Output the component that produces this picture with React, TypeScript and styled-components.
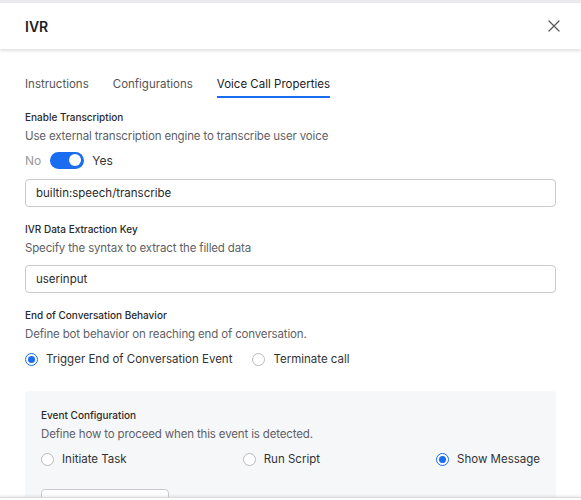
import React from "react";
import styled, { createGlobalStyle } from "styled-components";

const GlobalStyle = createGlobalStyle`
    html, body {
        margin: 0;
        padding: 0;
        background: #ffffff;
        font-family: Inter, "Noto Sans", "Liberation Sans", sans-serif;
        color: #222;
    }
    * { box-sizing: border-box; }
`;

const Drawer = styled.div`
    height: 500px;
    display: flex;
    flex-direction: column;
    border-top: 3px solid #ebebee;
    overflow: hidden;
`;

/* Header */
const Header = styled.div`
    height: 46px;
    flex-shrink: 0;
    display: flex;
    align-items: center;
    justify-content: space-between;
    padding: 0 20px 0 25px;
    background: #fff;
    box-shadow: 0 2px 3px rgba(0, 0, 0, 0.12);
    position: relative;
    z-index: 1;
`;
const Title = styled.h1`
    margin: 0;
    font-size: 14px;
    font-weight: 600;
    color: #1d1d1f;
`;
const CloseButton = styled.button`
    border: none;
    background: none;
    padding: 0;
    width: 14px;
    height: 14px;
    display: flex;
    align-items: center;
    justify-content: center;
    cursor: pointer;
`;

/* Tabs */
const Tabs = styled.div`
    display: flex;
    gap: 24px;
    margin: 26px 25px 0;
`;
const Tab = styled.div<{ $active?: boolean }>`
    font-size: 11.5px;
    line-height: 18px;
    padding-bottom: 3px;
    color: ${({ $active }) => ($active ? "#1d1d1f" : "#555")};
    border-bottom: 2px solid ${({ $active }) => ($active ? "#1a6cf0" : "transparent")};
`;

/* Body */
const Body = styled.div`
    flex: 1;
    overflow: hidden;
    padding: 11px 25px 0;
`;
const Label = styled.div<{ $top?: number }>`
    font-size: 10px;
    line-height: 16px;
    font-weight: 500;
    color: #2a2a2a;
    margin: ${({ $top }) => $top ?? 0}px 0 2px;
`;
const Desc = styled.div`
    font-size: 11.5px;
    letter-spacing: -0.15px;
    line-height: 18px;
    color: #5f5f66;
`;
const ToggleRow = styled.div`
    display: flex;
    align-items: center;
    height: 20px;
    margin-top: 5px;
    font-size: 12px;
`;
const ToggleText = styled.span<{ $on?: boolean }>`
    color: ${({ $on }) => ($on ? "#333" : "#999")};
`;
const Switch = styled.span`
    width: 34px;
    height: 17px;
    border-radius: 9px;
    background: #1a6cf0;
    margin: 0 8px 0 9px;
    display: flex;
    align-items: center;
    justify-content: flex-end;
    padding-right: 3px;
    &::after {
        content: "";
        width: 12px;
        height: 12px;
        border-radius: 50%;
        background: #fff;
    }
`;
const Input = styled.div<{ $top: number }>`
    height: 28px;
    margin-top: ${({ $top }) => $top}px;
    border: 1px solid #c9c9cf;
    border-radius: 4px;
    padding: 0 10px;
    display: flex;
    align-items: center;
    font-size: 11.5px;
    color: #2a2a2a;
`;
const RadioRow = styled.div<{ $spread?: boolean; $top: number }>`
    display: flex;
    align-items: center;
    height: 20px;
    margin-top: ${({ $top }) => $top}px;
    gap: 20px;
    justify-content: ${({ $spread }) => ($spread ? "space-between" : "flex-start")};
`;
const RadioItem = styled.label`
    display: flex;
    align-items: center;
    gap: 8px;
    font-size: 11.5px;
    color: #333;
`;
const RadioCircle = styled.span<{ $checked?: boolean }>`
    width: 13px;
    height: 13px;
    border-radius: 50%;
    border: 1px solid ${({ $checked }) => ($checked ? "#1a6cf0" : "#b9b9c0")};
    background: #fff;
    display: flex;
    align-items: center;
    justify-content: center;
    &::after {
        content: "";
        width: 7px;
        height: 7px;
        border-radius: 50%;
        background: ${({ $checked }) => ($checked ? "#1a6cf0" : "transparent")};
    }
`;

/* Event panel */
const Panel = styled.div`
    margin-top: 22px;
    background: #f6f7f9;
    border-radius: 4px;
    padding: 16px 16px 20px;
`;
const OutlineButton = styled.div`
    width: 128px;
    height: 32px;
    margin-top: 20px;
    border: 1px solid #c9c9cf;
    border-radius: 4px;
    background: #fff;
`;

const Footer = styled.div`
    height: 3px;
    flex-shrink: 0;
    background: #fff;
    border-top: 1px solid #dcdce0;
    box-shadow: 0 -1px 3px rgba(0, 0, 0, 0.1);
    position: relative;
`;

const Radio: React.FC<{ label: string; checked?: boolean }> = ({ label, checked }) => (
    <RadioItem>
        <RadioCircle $checked={checked} />
        {label}
    </RadioItem>
);

const App: React.FC = () => {
    return <>
        <GlobalStyle />
        <Drawer>
            <Header>
                <Title>IVR</Title>
                <CloseButton aria-label="close">
                    <svg width="12" height="12" viewBox="0 0 12 12">
                        <path d="M1 1L11 11M11 1L1 11" stroke="#555" strokeWidth="1.2" strokeLinecap="round" />
                    </svg>
                </CloseButton>
            </Header>
            <Tabs>
                <Tab>Instructions</Tab>
                <Tab>Configurations</Tab>
                <Tab $active>Voice Call Properties</Tab>
            </Tabs>
            <Body>
                <Label>Enable Transcription</Label>
                <Desc>Use external transcription engine to transcribe user voice</Desc>
                <ToggleRow>
                    <ToggleText>No</ToggleText>
                    <Switch />
                    <ToggleText $on>Yes</ToggleText>
                </ToggleRow>
                <Input $top={9}>builtin:speech/transcribe</Input>

                <Label $top={14}>IVR Data Extraction Key</Label>
                <Desc>Specify the syntax to extract the filled data</Desc>
                <Input $top={8}>userinput</Input>

                <Label $top={14}>End of Conversation Behavior</Label>
                <Desc>Define bot behavior on reaching end of conversation.</Desc>
                <RadioRow $top={6}>
                    <Radio label="Trigger End of Conversation Event" checked />
                    <Radio label="Terminate call" />
                </RadioRow>

                <Panel>
                    <Label>Event Configuration</Label>
                    <Desc>Define how to proceed when this event is detected.</Desc>
                    <RadioRow $spread $top={6}>
                        <Radio label="Initiate Task" />
                        <Radio label="Run Script" />
                        <Radio label="Show Message" checked />
                    </RadioRow>
                    <OutlineButton />
                </Panel>
            </Body>
            <Footer />
        </Drawer>
    </>;
};

export default App;
